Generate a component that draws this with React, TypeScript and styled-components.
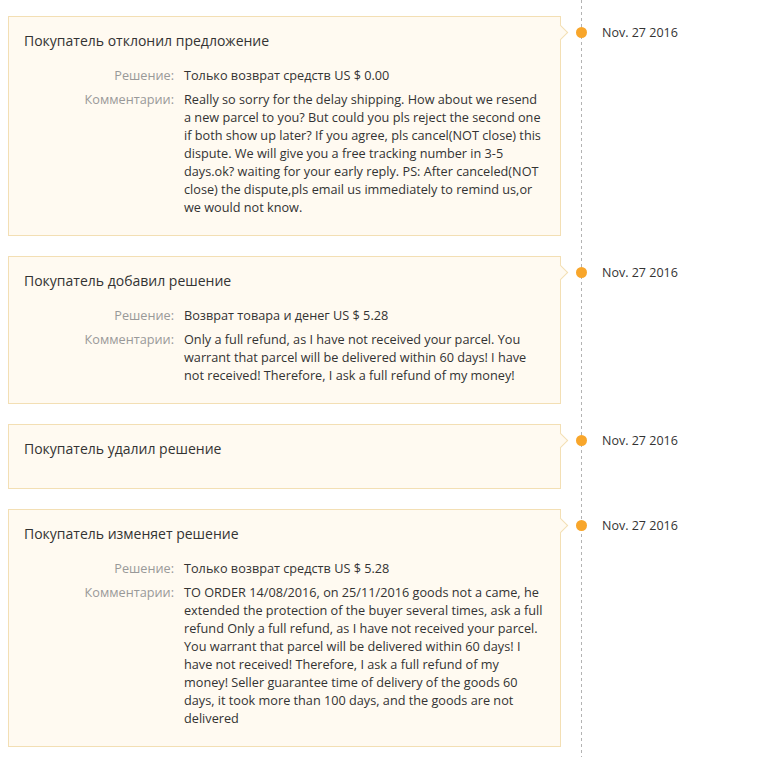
import React from 'react';
import styled, { createGlobalStyle } from 'styled-components';

type Row = { label: string; value: string };
type Entry = { title: string; date: string; rows: Row[] };

const entries: Entry[] = [
  {
    title: 'Покупатель отклонил предложение',
    date: 'Nov. 27 2016',
    rows: [
      { label: 'Решение:', value: 'Только возврат средств US $ 0.00' },
      {
        label: 'Комментарии:',
        value:
          'Really so sorry for the delay shipping. How about we resend a new parcel to you? But could you pls reject the second one if both show up later? If you agree, pls cancel(NOT close) this dispute. We will give you a free tracking number in 3-5 days.ok? waiting for your early reply. PS: After canceled(NOT close) the dispute,pls email us immediately to remind us,or we would not know.',
      },
    ],
  },
  {
    title: 'Покупатель добавил решение',
    date: 'Nov. 27 2016',
    rows: [
      { label: 'Решение:', value: 'Возврат товара и денег US $ 5.28' },
      {
        label: 'Комментарии:',
        value:
          'Only a full refund, as I have not received your parcel. You warrant that parcel will be delivered within 60 days! I have not received! Therefore, I ask a full refund of my money!',
      },
    ],
  },
  {
    title: 'Покупатель удалил решение',
    date: 'Nov. 27 2016',
    rows: [],
  },
  {
    title: 'Покупатель изменяет решение',
    date: 'Nov. 27 2016',
    rows: [
      { label: 'Решение:', value: 'Только возврат средств US $ 5.28' },
      {
        label: 'Комментарии:',
        value:
          'TO ORDER 14/08/2016, on 25/11/2016 goods not a came, he extended the protection of the buyer several times, ask a full refund Only a full refund, as I have not received your parcel. You warrant that parcel will be delivered within 60 days! I have not received! Therefore, I ask a full refund of my money! Seller guarantee time of delivery of the goods 60 days, it took more than 100 days, and the goods are not delivered',
      },
    ],
  },
];

const GlobalStyle = createGlobalStyle`
  html, body {
    margin: 0;
    padding: 0;
    background: #fff;
  }
  body {
    font-family: "Open Sans", "Liberation Sans", Arial, sans-serif;
    color: #333;
  }
  * {
    box-sizing: border-box;
  }
`;

export default function App() {
  return (
    <>
      <GlobalStyle />
      <Timeline>
        {entries.map((entry, i) => (
          <Item key={i}>
            <Card>
              <Title>{entry.title}</Title>
              {entry.rows.length > 0 && (
                <Details>
                  {entry.rows.map((row, j) => (
                    <React.Fragment key={j}>
                      <Label>{row.label}</Label>
                      <Value>{row.value}</Value>
                    </React.Fragment>
                  ))}
                </Details>
              )}
            </Card>
            <Marker>
              <Dot />
              <DateText>{entry.date}</DateText>
            </Marker>
          </Item>
        ))}
      </Timeline>
    </>
  );
}

const Timeline = styled.div`
  width: 771px;
  min-height: 757px;
  padding: 16px 0 12px 8px;
  display: flex;
  flex-direction: column;
  gap: 20px;
  background-image: repeating-linear-gradient(
    to bottom,
    #b3b3b3 0,
    #b3b3b3 3px,
    transparent 3px,
    transparent 6px
  );
  background-size: 1px 100%;
  background-position: 581px 0;
  background-repeat: no-repeat;
`;

const Item = styled.div`
  display: flex;
  align-items: flex-start;
`;

const Card = styled.div`
  position: relative;
  width: 553px;
  flex-shrink: 0;
  padding: 14px 15px 19px;
  background: #fffaf1;
  border: 1px solid #f3dfb4;

  &::after {
    content: '';
    position: absolute;
    top: 10px;
    right: -6px;
    width: 10px;
    height: 10px;
    background: #fffaf1;
    border-top: 1px solid #f3dfb4;
    border-right: 1px solid #f3dfb4;
    transform: rotate(45deg);
  }
`;

const Title = styled.div`
  font-size: 14px;
  line-height: 20px;
  color: #333;
  margin-bottom: 10px;
`;

const Details = styled.div`
  display: grid;
  grid-template-columns: 150px 1fr;
  column-gap: 10px;
  row-gap: 6px;
  padding-top: 5px;
  font-size: 12.7px;
  line-height: 18px;
`;

const Label = styled.div`
  text-align: right;
  color: #999;
`;

const Value = styled.div`
  color: #333;
`;

const Marker = styled.div`
  display: flex;
  align-items: center;
  height: 18px;
  margin-top: 7px;
  margin-left: 15px;
`;

const Dot = styled.span`
  width: 11px;
  height: 11px;
  border-radius: 50%;
  background: #f8a62b;
  flex-shrink: 0;
`;

const DateText = styled.span`
  margin-left: 15px;
  font-size: 12.5px;
  color: #333;
  white-space: nowrap;
`;
